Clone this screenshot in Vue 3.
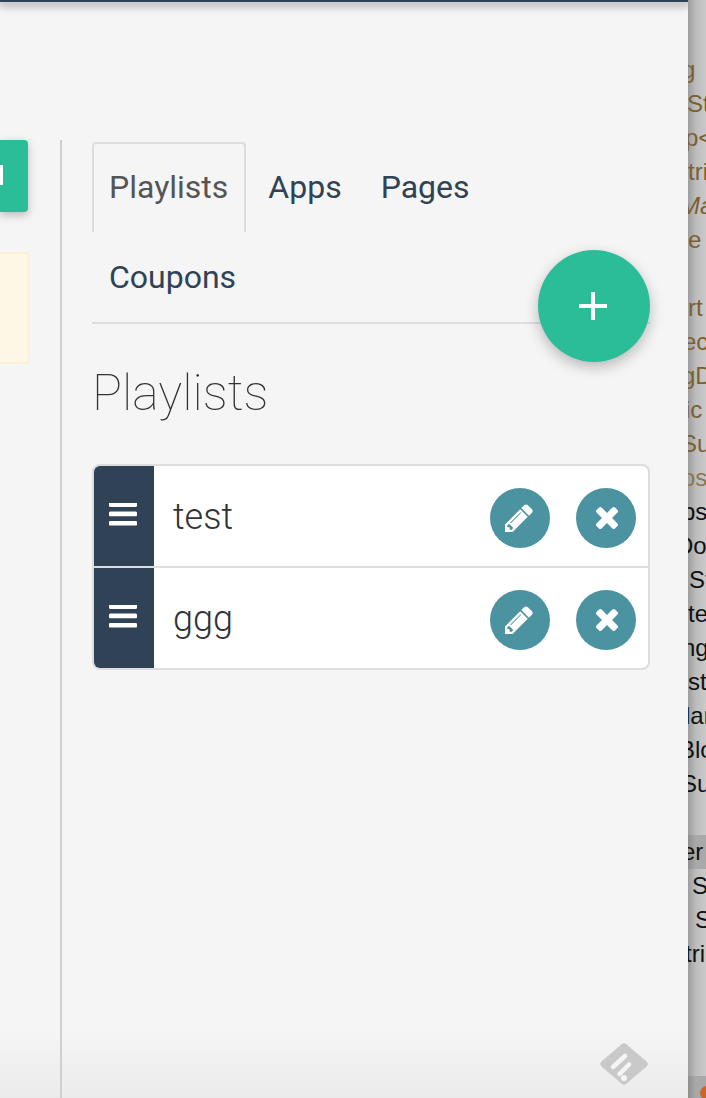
<script setup>
import { ref } from "vue";

const tabs = ["Playlists", "Apps", "Pages", "Coupons"];
const ativa = ref("Playlists");
const playlists = ref([{ nome: "test" }, { nome: "ggg" }]);

// pedaco do editor que aparece atras do painel
const linhas = [
  { t: "g", x: -6, c: "brown" },
  { t: "St", x: -1, c: "brown" },
  { t: "p<", x: -3, c: "brown" },
  { t: "tri", x: 0, c: "brown" },
  { t: "Ma", x: -8, c: "brown", i: true },
  { t: "e", x: 0, c: "brown" },
  { t: "", x: 0 },
  { t: "rt", x: 0, c: "brown" },
  { t: "ec", x: -5, c: "brown" },
  { t: "gD", x: -6, c: "brown" },
  { t: "ic", x: -3, c: "brown" },
  { t: "Su", x: -7, c: "brown" },
  { t: "os", x: -6, c: "fade" },
  { t: "bs", x: -6 },
  { t: "Do", x: -12 },
  { t: "St", x: 1 },
  { t: "te", x: 0 },
  { t: "ng", x: -6 },
  { t: "st", x: 0 },
  { t: "lar", x: -3 },
  { t: "Blo", x: -9 },
  { t: "Su", x: -7 },
  { t: "", x: 0 },
  { t: "er", x: -6, c: "band" },
  { t: "S", x: 4 },
  { t: "S", x: 7 },
  { t: "tri", x: -3 },
];
</script>

<template>
  <div class="pagina">
    <div class="painel">
      <div class="topo"></div>
      <div class="corpo">
        <div class="esquerda">
          <div class="botao-verde"><span></span></div>
          <div class="aviso"></div>
        </div>

        <div class="direita">
          <ul class="tabs">
            <li v-for="tab in tabs" :key="tab" :class="{ ativa: tab === ativa }" @click="ativa = tab">
              {{ tab }}
            </li>
          </ul>

          <button class="fab" type="button" aria-label="Add">
            <svg width="28" height="28" viewBox="0 0 28 28"><path d="M12 0h4v12h12v4H16v12h-4V16H0v-4h12z" fill="#fff" /></svg>
          </button>

          <h1>Playlists</h1>

          <div class="lista">
            <div v-for="item in playlists" :key="item.nome" class="linha">
              <div class="arrastar">
                <svg width="28" height="23" viewBox="128 320 1536 1216">
                  <path d="M1664 1344v128q0 26-19 45t-45 19h-1408q-26 0-45-19t-19-45v-128q0-26 19-45t45-19h1408q26 0 45 19t19 45zm0-512v128q0 26-19 45t-45 19h-1408q-26 0-45-19t-19-45v-128q0-26 19-45t45-19h1408q26 0 45 19t19 45zm0-512v128q0 26-19 45t-45 19h-1408q-26 0-45-19t-19-45v-128q0-26 19-45t45-19h1408q26 0 45 19t19 45z" fill="#fff" />
                </svg>
              </div>
              <span class="nome">{{ item.nome }}</span>
              <button class="redondo" type="button" aria-label="Edit">
                <svg width="28" height="28" viewBox="128 128 1536 1536">
                  <path d="M491 1536l91-91-235-235-91 91v107h128v128h107zm523-928q0-22-22-22-10 0-17 7l-542 542q-7 7-7 17 0 22 22 22 10 0 17-7l542-542q7-7 7-17zm-54-192l416 416-832 832h-416v-416zm683 96q0 53-37 90l-166 166-416-416 166-165q36-38 90-38 53 0 91 38l235 234q37 39 37 91z" fill="#fff" />
                </svg>
              </button>
              <button class="redondo" type="button" aria-label="Delete">
                <svg width="22" height="22" viewBox="302 366 1188 1188">
                  <path d="M1490 1322q0 40-28 68l-136 136q-28 28-68 28t-68-28l-294-294-294 294q-28 28-68 28t-68-28l-136-136q-28-28-28-68t28-68l294-294-294-294q-28-28-28-68t28-68l136-136q28-28 68-28t68 28l294 294 294-294q28-28 68-28t68 28l136 136q28 28 28 68t-28 68l-294 294 294 294q28 28 28 68z" fill="#fff" />
                </svg>
              </button>
            </div>
          </div>
        </div>
      </div>

      <svg class="feedly" width="48" height="42" viewBox="0 0 48 42">
        <path d="M24 4 44 21 24 38 4 21z" fill="#c9c9c9" stroke="#c9c9c9" stroke-width="7" stroke-linejoin="round" />
        <path d="M13 24 25 13M19.500 31 29 21.500" stroke="#f5f5f5" stroke-width="4.500" stroke-linecap="round" />
        <circle cx="24" cy="35" r="3" fill="#f5f5f5" />
      </svg>
    </div>

    <div class="fundo">
      <div
        v-for="(l, i) in linhas"
        :key="i"
        class="codigo"
        :class="[l.c, { italico: l.i }]"
      >
        <span :style="{ marginLeft: l.x + 'px' }">{{ l.t }}</span>
      </div>
      <div class="rodape"><i></i></div>
    </div>
  </div>
</template>

<style>
html,
body {
  margin: 0;
  overflow: hidden;
  background: #c4c4c4;
}
</style>

<style scoped>
.pagina {
  display: flex;
  width: 706px;
  height: 1098px;
  overflow: hidden;
  font-family: Roboto, "Liberation Sans", sans-serif;
}

.painel {
  position: relative;
  width: 688px;
  flex: none;
  display: flex;
  flex-direction: column;
  overflow: hidden;
  background: linear-gradient(#f5f5f5 1030px, #ebebeb 1098px);
}

.topo {
  height: 2px;
  flex: none;
  background: #2f4256;
  box-shadow: 0 2px 9px 2px rgba(0, 0, 0, 0.32);
}

.corpo {
  flex: 1;
  display: flex;
  padding-top: 138px;
  min-height: 0;
}

.esquerda {
  width: 60px;
  flex: none;
  border-right: 2px solid #cfcfcf;
}

.botao-verde {
  width: 28px;
  height: 72px;
  display: flex;
  align-items: center;
  background: #2bbd98;
  border-radius: 0 4px 4px 0;
  box-shadow: 0 3px 8px rgba(0, 0, 0, 0.25);
}

.botao-verde span {
  width: 3px;
  height: 20px;
  margin-top: -2px;
  background: #fff;
}

.aviso {
  width: 28px;
  height: 108px;
  margin-top: 40px;
  background: #fff7e6;
  border: 2px solid #fdf0d5;
  border-left: 0;
  border-radius: 0 4px 4px 0;
}

.direita {
  position: relative;
  width: 558px;
  margin-left: 30px;
}

.tabs {
  display: flex;
  flex-wrap: wrap;
  margin: 2px 0 0;
  padding: 0;
  list-style: none;
  border-bottom: 2px solid #ddd;
}

.tabs li {
  height: 90px;
  box-sizing: border-box;
  padding: 0 17px;
  margin-right: 5px;
  font-size: 32px;
  line-height: 90px;
  color: #2f4256;
  cursor: pointer;
}

.tabs li.ativa {
  padding: 0 16px 0 15px;
  line-height: 86px;
  border: 2px solid #ddd;
  border-bottom: 0;
  border-radius: 4px 4px 0 0;
  color: #555;
}

.fab {
  position: absolute;
  top: 110px;
  right: 0;
  width: 112px;
  height: 112px;
  display: flex;
  align-items: center;
  justify-content: center;
  padding: 0 2px 0 0;
  border: 0;
  border-radius: 50%;
  background: #2bbd98;
  box-shadow: 0 5px 14px rgba(0, 0, 0, 0.25);
}

h1 {
  margin: 36px 0 0;
  font-size: 50px;
  line-height: 66px;
  font-weight: 100;
  color: #333;
}

.lista {
  margin-top: 38px;
  border: 2px solid #ddd;
  border-radius: 8px;
  background: #fff;
  overflow: hidden;
}

.linha {
  display: flex;
  align-items: center;
  gap: 26px;
  height: 100px;
  box-sizing: border-box;
  padding-right: 12px;
}

.linha + .linha {
  border-top: 2px solid #ddd;
  height: 102px;
}

.arrastar {
  width: 60px;
  align-self: stretch;
  display: flex;
  align-items: center;
  justify-content: center;
  background: #2f4256;
  padding: 0 2px 4px 0;
  box-sizing: border-box;
}

.nome {
  flex: 1;
  margin-left: -7px;
  padding-top: 1px;
  font-size: 36px;
  font-weight: 300;
  color: #333;
}

.redondo {
  width: 60px;
  height: 60px;
  flex: none;
  display: flex;
  align-items: center;
  justify-content: center;
  padding: 0;
  border: 0;
  border-radius: 50%;
  background: #4b93a1;
  margin-top: 4px;
}

.redondo svg {
  margin-right: 2px;
}

.redondo:last-child svg {
  margin: 0 0 0 2px;
}

.feedly {
  position: absolute;
  left: 600px;
  top: 1043px;
}

.fundo {
  position: relative;
  flex: 1;
  padding-top: 53px;
  background: linear-gradient(90deg, #9d9d9d, #bdbdbd 8px, #c9c9c9);
  overflow: hidden;
}

.codigo {
  height: 34px;
  font-family: "Liberation Sans", Arial, sans-serif;
  font-size: 24px;
  line-height: 34px;
  white-space: nowrap;
  color: #111;
}

.codigo span {
  display: inline-block;
}

.brown {
  color: #7b5f33;
}

.fade {
  color: #8c7650;
}

.band {
  background: linear-gradient(90deg, #8f8f8f, #a9a9a9 8px);
}

.italico {
  font-style: italic;
}

.rodape {
  position: absolute;
  left: 0;
  right: 0;
  bottom: 0;
  height: 22px;
  background: linear-gradient(90deg, #8f8f8f, #a9a9a9 8px);
}

.rodape i {
  position: absolute;
  left: 12px;
  top: 10px;
  width: 14px;
  height: 14px;
  border-radius: 50%;
  background: #c9662a;
}
</style>
